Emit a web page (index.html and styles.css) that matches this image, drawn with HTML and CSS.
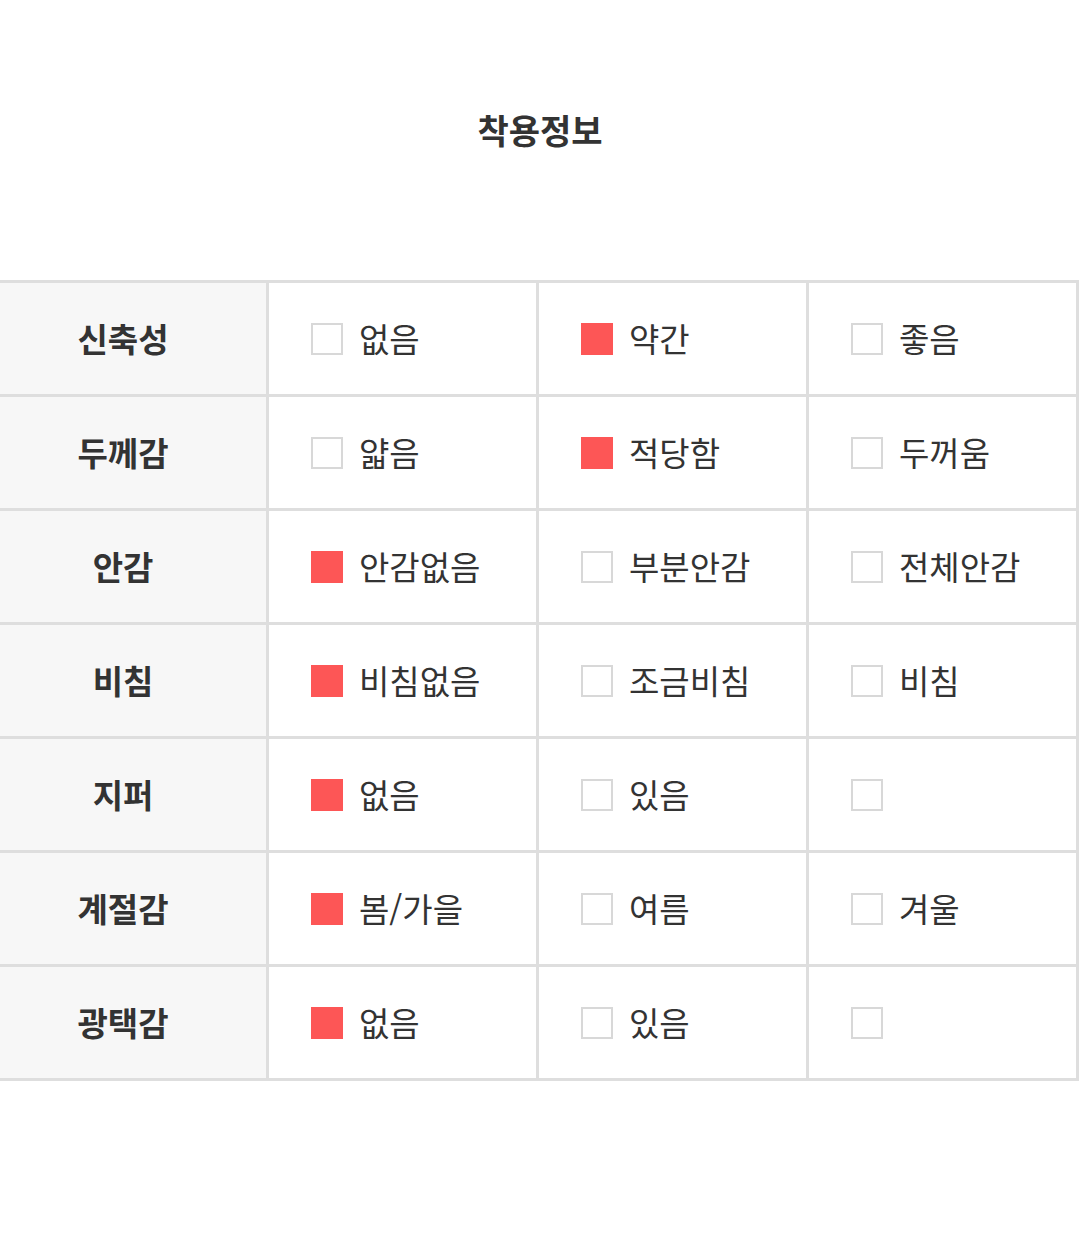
FILE: index.html
```html
<!DOCTYPE html>
<html lang="ko">
<head>
<meta charset="utf-8">
<link rel="stylesheet" href="styles.css">
</head>
<body>
<div class="page">
  <h2 class="title">착용정보</h2>
  <div class="table">
    <div class="row">
      <div class="head">신축성</div>
      <div class="cell"><span class="box"></span><span class="label">없음</span></div>
      <div class="cell"><span class="box on"></span><span class="label">약간</span></div>
      <div class="cell"><span class="box"></span><span class="label">좋음</span></div>
    </div>
    <div class="row">
      <div class="head">두께감</div>
      <div class="cell"><span class="box"></span><span class="label">얇음</span></div>
      <div class="cell"><span class="box on"></span><span class="label">적당함</span></div>
      <div class="cell"><span class="box"></span><span class="label">두꺼움</span></div>
    </div>
    <div class="row">
      <div class="head">안감</div>
      <div class="cell"><span class="box on"></span><span class="label">안감없음</span></div>
      <div class="cell"><span class="box"></span><span class="label">부분안감</span></div>
      <div class="cell"><span class="box"></span><span class="label">전체안감</span></div>
    </div>
    <div class="row">
      <div class="head">비침</div>
      <div class="cell"><span class="box on"></span><span class="label">비침없음</span></div>
      <div class="cell"><span class="box"></span><span class="label">조금비침</span></div>
      <div class="cell"><span class="box"></span><span class="label">비침</span></div>
    </div>
    <div class="row">
      <div class="head">지퍼</div>
      <div class="cell"><span class="box on"></span><span class="label">없음</span></div>
      <div class="cell"><span class="box"></span><span class="label">있음</span></div>
      <div class="cell"><span class="box"></span></div>
    </div>
    <div class="row">
      <div class="head">계절감</div>
      <div class="cell"><span class="box on"></span><span class="label">봄/가을</span></div>
      <div class="cell"><span class="box"></span><span class="label">여름</span></div>
      <div class="cell"><span class="box"></span><span class="label">겨울</span></div>
    </div>
    <div class="row">
      <div class="head">광택감</div>
      <div class="cell"><span class="box on"></span><span class="label">없음</span></div>
      <div class="cell"><span class="box"></span><span class="label">있음</span></div>
      <div class="cell"><span class="box"></span></div>
    </div>
  </div>
</div>
</body>
</html>
```
FILE: styles.css
```css
html, body {
  margin: 0;
  padding: 0;
  background: #ffffff;
}
body {
  font-family: "Noto Sans CJK KR", "Noto Sans", sans-serif;
  color: #333333;
}
.page {
  width: 1080px;
  height: 1257px;
  overflow: hidden;
}
.title {
  margin: 0;
  padding-top: 110px;
  height: 40px;
  line-height: 40px;
  font-size: 34px;
  font-weight: 700;
  text-align: center;
  color: #333333;
  margin-bottom: 130px;
}
.table {
  width: 1079px;
  border-top: 3px solid #dedede;
}
.row {
  display: grid;
  grid-template-columns: 269px 270px 270px 270px;
  height: 114px;
}
.head, .cell {
  border-right: 3px solid #dedede;
  border-bottom: 3px solid #dedede;
  box-sizing: border-box;
  display: flex;
  align-items: center;
}
.head {
  background: #f7f7f7;
  justify-content: center;
  padding-right: 20px;
  padding-bottom: 2px;
  font-size: 33px;
  font-weight: 700;
  color: #333333;
}
.cell {
  padding-left: 42px;
  gap: 16px;
  font-size: 33px;
  color: #333333;
}
.box {
  width: 32px;
  height: 32px;
  box-sizing: border-box;
  border: 2px solid #d8d8d8;
  background: #ffffff;
  flex: none;
}
.box.on {
  border: none;
  background: #fd5656;
}
.label {
  line-height: 36px;
  padding-bottom: 2px;
}
```
